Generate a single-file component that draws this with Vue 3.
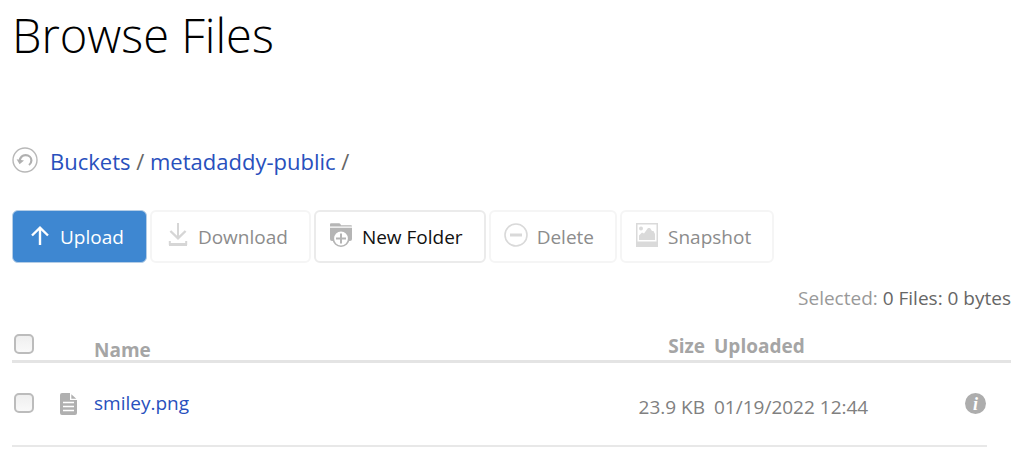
<script setup>
import { ref } from 'vue'

const files = ref([
  { name: 'smiley.png', size: '23.9 KB', uploaded: '01/19/2022 12:44', checked: false },
])
const allChecked = ref(false)
</script>

<template>
  <main class="page">
    <h1>Browse Files</h1>

    <nav class="crumbs" aria-label="Breadcrumb">
      <button class="back" type="button" aria-label="Back">
        <svg width="26" height="26" viewBox="0 0 26 26" fill="none">
          <circle cx="13" cy="13" r="12" stroke="#b8b8b8" stroke-width="1.4" />
          <path d="M7.600 14C8.300 10 10.800 8.200 13.600 8.200c3.400 0 5.800 2.300 5.800 5.200 0 1.900-.9 3.400-2.400 4.600" stroke="#b0b0b0" stroke-width="2.200" />
          <path d="M4.600 12.200l3 5 4.400-3.600z" fill="#b0b0b0" />
        </svg>
      </button>
      <span><a href="#buckets">Buckets</a> / <a href="#metadaddy-public">metadaddy-public</a> /</span>
    </nav>

    <div class="toolbar">
      <button class="btn primary" type="button">
        <svg class="narrow" width="20" height="24" viewBox="0 0 20 24" fill="none" stroke="#fff" stroke-width="2.4">
          <path d="M10 22V5M2 12.500L10 4.600l8 7.900" />
        </svg>
        Upload
      </button>
      <button class="btn" type="button" disabled>
        <svg class="narrow" width="20" height="24" viewBox="0 0 20 24" fill="none" stroke="#d6d6d6">
          <path d="M10 0v15" stroke-width="2" />
          <path d="M2.4 8L10 15.4 17.6 8" stroke-width="2.4" />
          <path d="M1.8 18v4M18.200 18v4" stroke-width="2" />
          <path d="M1 21.500h18" stroke-width="3" />
        </svg>
        Download
      </button>
      <button class="btn" type="button">
        <svg class="wide" width="24" height="24" viewBox="0 0 24 24">
          <path d="M1 3.400V1.500Q1 .3 2 .3h8q1 0 1.400.8l.6 1.200H22q1 0 1 1.100z" fill="#b5b5b5" />
          <path d="M1 4.800h22V16q0 2-2 2H3q-2 0-2-2z" fill="#b5b5b5" />
          <circle cx="12" cy="15.500" r="7.700" fill="#fff" stroke="#b5b5b5" stroke-width="1.600" />
          <path d="M12 10.500v10M7 15.500h10" stroke="#b5b5b5" stroke-width="2" />
        </svg>
        New Folder
      </button>
      <button class="btn" type="button" disabled>
        <svg class="wide" width="24" height="24" viewBox="0 0 24 24" fill="none" stroke="#d9d9d9">
          <circle cx="12" cy="12" r="11" stroke-width="1.6" />
          <path d="M6 12h12" stroke-width="3" />
        </svg>
        Delete
      </button>
      <button class="btn" type="button" disabled>
        <svg class="wide" width="24" height="24" viewBox="0 0 24 24" fill="#dadada">
          <path fill-rule="evenodd" d="M1 0h22v24H1zM2.500 1.500v17h19v-17z" />
          <circle cx="6" cy="5.500" r="2" />
          <path d="M4 17v-4.500l3-3 2 1 4-5.500h2l2 3h1.500L20 11v6z" />
        </svg>
        Snapshot
      </button>
    </div>

    <p class="summary">Selected: <strong>0 Files: 0 bytes</strong></p>

    <table>
      <thead>
        <tr>
          <th class="check"><input v-model="allChecked" type="checkbox" aria-label="Select all files" /></th>
          <th class="kind"></th>
          <th class="name">Name</th>
          <th class="size">Size</th>
          <th class="date">Uploaded</th>
          <th class="info"></th>
          <th class="gutter"></th>
        </tr>
      </thead>
      <tbody>
        <tr v-for="file in files" :key="file.name">
          <td class="check"><input v-model="file.checked" type="checkbox" :aria-label="'Select ' + file.name" /></td>
          <td class="kind">
            <svg width="18" height="22" viewBox="0 0 18 22">
              <path d="M2 0h8v7h7v13q0 2-2 2H2q-2 0-2-2V2Q0 0 2 0z" fill="#b0b0b0" />
              <path d="M11.300 1.200V5.800h5z" fill="#b0b0b0" />
              <path d="M3 9.500h11M3 13.500h11M3 17.500h11" stroke="#fff" stroke-width="1.500" />
            </svg>
          </td>
          <td class="name"><a href="#smiley">{{ file.name }}</a></td>
          <td class="size">{{ file.size }}</td>
          <td class="date">{{ file.uploaded }}</td>
          <td class="info"><button type="button" :aria-label="'Details for ' + file.name"><i>i</i></button></td>
          <td class="gutter"></td>
        </tr>
      </tbody>
    </table>
  </main>
</template>

<style>
body {
  background: #fff;
}
</style>

<style scoped>
.page {
  padding: 3px 13px 16px 12px;
  font-family: "Open Sans", "Noto Sans", sans-serif;
  font-size: 19px;
  line-height: 28px;
  color: #666;
}
h1 {
  margin: 0;
  font-size: 47px;
  line-height: 64px;
  font-weight: 300;
  color: #000;
}
a {
  color: #2850bd;
  text-decoration: none;
}
button {
  font: inherit;
  cursor: pointer;
}
.crumbs {
  display: flex;
  gap: 12px;
  margin-top: 78px;
  font-size: 22px;
  line-height: 32px;
}
.back {
  display: flex;
  width: 26px;
  height: 26px;
  margin-top: 2px;
  padding: 0;
  border: 0;
  background: none;
}
.toolbar {
  display: flex;
  gap: 3px;
  margin-top: 33px;
}
.btn {
  display: flex;
  gap: 10px;
  align-items: center;
  height: 53px;
  padding: 0 21px 0 13px;
  border: 2px solid #ebebeb;
  border-radius: 6px;
  background: #fff;
  color: #111;
  white-space: nowrap;
}
.btn svg {
  margin-bottom: 4px;
}
.btn .narrow {
  margin-left: 3px;
}
.btn .wide {
  margin-right: -1px;
}
.btn:disabled {
  border-color: #f5f5f5;
  color: #8c8c8c;
  cursor: default;
}
.btn.primary {
  padding: 0 22px 0 14px;
  border: 1px solid #b4cde6;
  background: #3e87d1;
  color: #fff;
}
.summary {
  margin: 21px 0 0;
  text-align: right;
  color: #999;
}
.summary strong {
  font-weight: 400;
  color: #666;
}
table {
  width: 100%;
  margin-top: 16px;
  border-spacing: 0;
}
th, td {
  box-sizing: border-box;
  padding: 0;
  text-align: left;
  vertical-align: top;
  white-space: nowrap;
}
th {
  height: 35px;
  padding-top: 8px;
  border-bottom: 3px solid #e4e4e4;
  color: #a5a5a5;
  line-height: 20px;
}
td {
  height: 84px;
  padding-top: 30px;
  border-bottom: 2px solid #e8e8e8;
  color: #808080;
}
th.name {
  padding-top: 12px;
}
th.check {
  padding-top: 6px;
}
td.name {
  padding-top: 26px;
}
.check { width: 48px; }
.kind { width: 34px; }
.size { width: 100px; text-align: right; }
.date { width: 178px; padding-left: 9px; }
.info { width: 104px; text-align: right; }
.gutter { width: 24px; }
td.gutter { border-bottom: 0; }
td.info { padding-right: 1px; }
.kind svg {
  display: block;
}
input {
  appearance: none;
  display: block;
  width: 20px;
  height: 20px;
  margin: 0 0 0 2px;
  border: 2px solid #bcbcbc;
  border-radius: 5px;
  background: linear-gradient(#efefef, #f9f9f9);
}
input:checked {
  background: #3e87d1;
}
.info button {
  display: inline-block;
  width: 21px;
  height: 21px;
  padding: 0;
  border: 0;
  border-radius: 50%;
  background: #adadad;
  color: #fff;
  font: bold 18px/20px "Liberation Serif", serif;
  vertical-align: top;
}
</style>
